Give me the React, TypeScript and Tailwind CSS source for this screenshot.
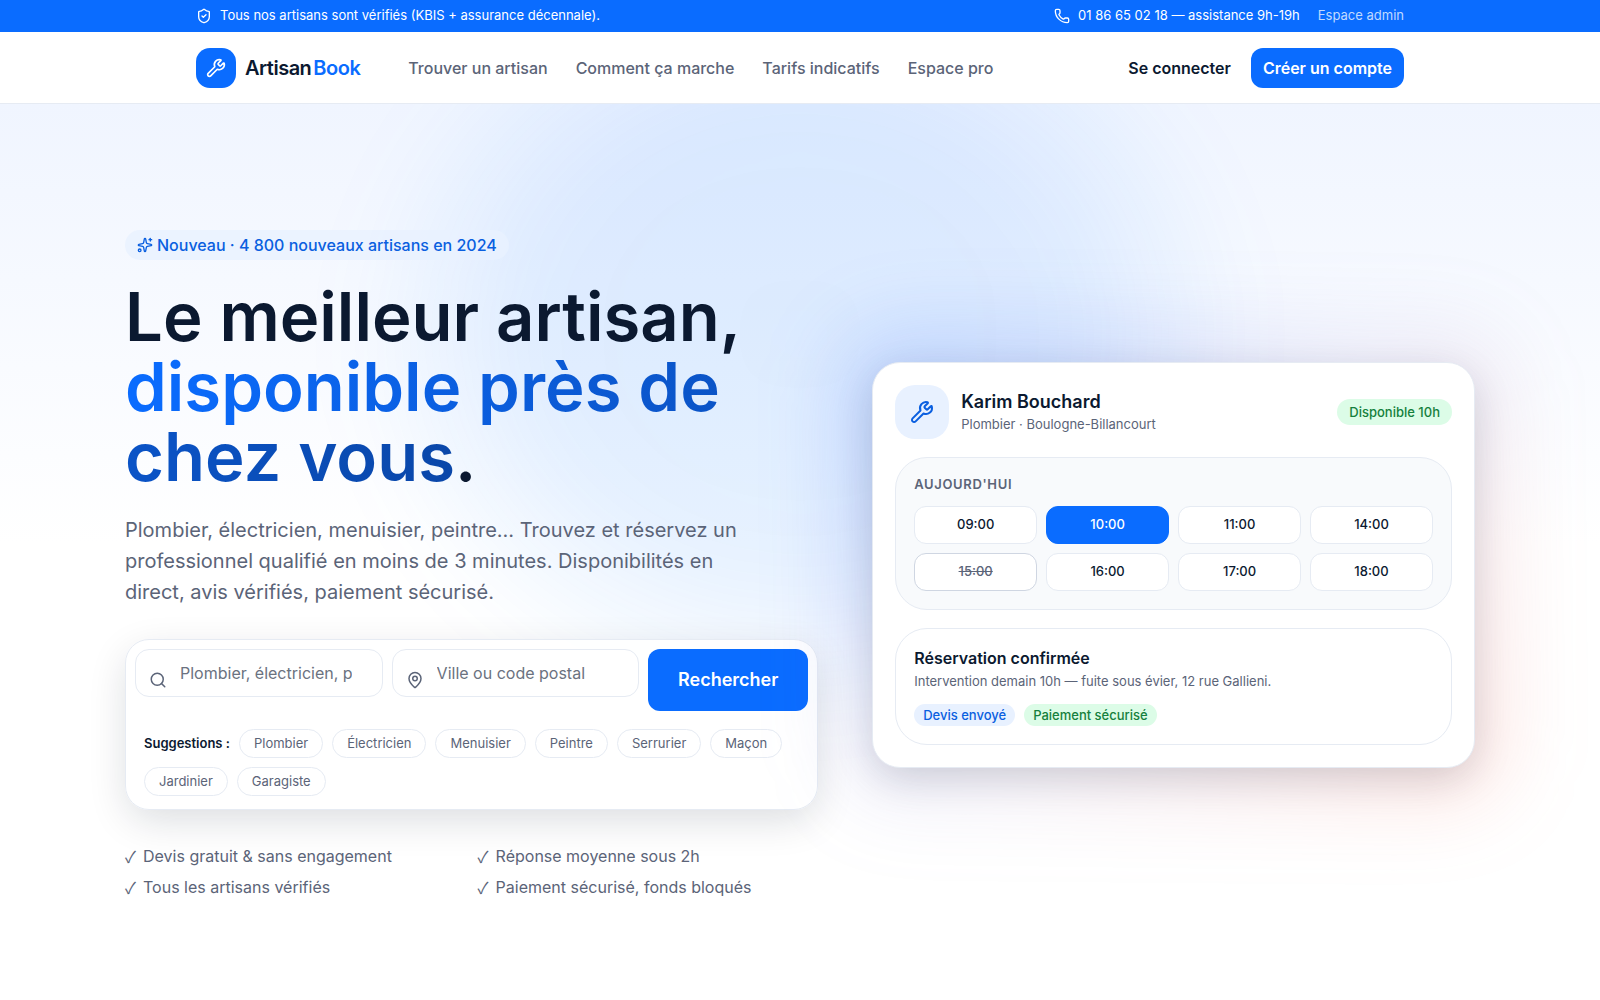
import { MapPin, Phone, Search, ShieldCheck, Sparkles, Wrench } from "lucide-react";

const navLinks = ["Trouver un artisan", "Comment ça marche", "Tarifs indicatifs", "Espace pro"];

const suggestions = [
  "Plombier",
  "Électricien",
  "Menuisier",
  "Peintre",
  "Serrurier",
  "Maçon",
  "Jardinier",
  "Garagiste",
];

const features = [
  "Devis gratuit & sans engagement",
  "Réponse moyenne sous 2h",
  "Tous les artisans vérifiés",
  "Paiement sécurisé, fonds bloqués",
];

const slots = [
  { time: "09:00" },
  { time: "10:00", selected: true },
  { time: "11:00" },
  { time: "14:00" },
  { time: "15:00", taken: true },
  { time: "16:00" },
  { time: "17:00" },
  { time: "18:00" },
];

const TopBar = () => (
  <div className="bg-[#0a6cff] text-[13px] text-white">
    <div className="mx-auto flex h-8 max-w-[1240px] items-center justify-between px-4">
      <p className="flex items-center gap-2">
        <ShieldCheck className="size-4" />
        Tous nos artisans sont vérifiés (KBIS + assurance décennale).
      </p>
      <div className="flex items-center gap-[18px]">
        <a href="#telephone" className="flex items-center gap-2">
          <Phone className="size-4" />
          01 86 65 02 18 — assistance 9h-19h
        </a>
        <a href="#admin" className="text-white/75">
          Espace admin
        </a>
      </div>
    </div>
  </div>
);

const Header = () => (
  <header className="border-b border-[#e6ebf3] bg-white">
    <div className="mx-auto flex h-[71px] max-w-[1240px] items-center px-4">
      <a href="#accueil" className="flex items-center gap-[9px]">
        <span className="flex size-10 items-center justify-center rounded-[14px] bg-[#0a6cff] text-white">
          <Wrench className="size-5" />
        </span>
        <span className="flex gap-[2px] text-xl font-semibold tracking-tight">
          Artisan<span className="text-[#0a6cff]">Book</span>
        </span>
      </a>
      <nav className="ml-12 flex gap-7 text-base font-medium text-[#5b6478]">
        {navLinks.map((link) => (
          <a key={link} href="#nav">
            {link}
          </a>
        ))}
      </nav>
      <div className="ml-auto flex items-center gap-5 text-base font-semibold">
        <a href="#connexion">Se connecter</a>
        <button className="h-10 rounded-xl bg-[#0a6cff] px-3 text-white">Créer un compte</button>
      </div>
    </div>
  </header>
);

const SearchCard = () => (
  <form className="mt-[31px] rounded-3xl border border-[#e6ebf3] bg-white/90 p-[9px] shadow-[0_12px_40px_-4px_rgba(15,23,42,0.16)]">
    <div className="grid grid-cols-[1fr_1fr_160px] gap-[9px]">
      <div className="relative">
        <Search className="absolute top-1/2 left-[14px] size-[18px] -translate-y-1/2 text-[#5b6478]" />
        <input
          aria-label="Métier"
          placeholder="Plombier, électricien, peintre…"
          className="h-12 w-full rounded-[14px] border border-[#e6ebf3] bg-white pr-[30px] pl-11 text-base placeholder:text-[#6b7280]"
        />
      </div>
      <div className="relative">
        <MapPin className="absolute top-1/2 left-[14px] size-[18px] -translate-y-1/2 text-[#5b6478]" />
        <input
          aria-label="Ville"
          placeholder="Ville ou code postal"
          className="h-12 w-full rounded-[14px] border border-[#e6ebf3] bg-white pr-[30px] pl-11 text-base placeholder:text-[#6b7280]"
        />
      </div>
      <button type="button" className="h-[62px] rounded-xl bg-[#0a6cff] text-lg font-semibold text-white">
        Rechercher
      </button>
    </div>
    <div className="flex flex-wrap items-center gap-[9px] px-[9px] pt-[18px] pb-1 text-[13px]">
      <span className="font-semibold">Suggestions :</span>
      {suggestions.map((s) => (
        <button
          key={s}
          type="button"
          className="h-[29px] rounded-full border border-[#e6ebf3] bg-white px-[14px] text-[#5b6478]"
        >
          {s}
        </button>
      ))}
    </div>
  </form>
);

const slotClass = (slot: { selected?: boolean; taken?: boolean }) => {
  if (slot.selected) return "border-[#0a6cff] bg-[#0a6cff] text-white";
  if (slot.taken) return "border-[#cfd6e2] bg-white text-[#5b6478] line-through";
  return "border-[#e6ebf3] bg-white";
};

const BookingCard = () => (
  <div className="relative pb-1">
    {/* colour glow behind the card */}
    <div className="absolute -inset-8 rounded-[60px] bg-[linear-gradient(135deg,rgba(40,100,255,0.2),rgba(130,110,190,0.11)_50%,rgba(255,100,70,0.17))] blur-[40px]" />
    <div className="relative rounded-[28px] border border-[#e6ebf3] bg-white p-[22px] shadow-[0_12px_40px_-4px_rgba(15,23,42,0.18)]">
      <div className="flex items-center">
        <span className="flex size-[54px] items-center justify-center rounded-[20px] bg-[#e8f1ff] text-[#0a5fe0]">
          <Wrench className="size-6" />
        </span>
        <div className="ml-3">
          <p className="text-lg leading-6 font-semibold">Karim Bouchard</p>
          <p className="text-[13px] leading-5 text-[#5b6478]">Plombier · Boulogne-Billancourt</p>
        </div>
        <span className="ml-auto rounded-full bg-[#dcfce7] px-3 py-1 text-[13px] leading-[18px] font-medium text-[#15803d]">
          Disponible 10h
        </span>
      </div>

      <div className="mt-[18px] rounded-[32px] border border-[#e6ebf3] bg-[#f8fafc] p-[18px]">
        <p className="text-[13px] leading-4 font-semibold tracking-wider text-[#5b6478] uppercase">Aujourd'hui</p>
        <div className="mt-[14px] grid grid-cols-4 gap-[9px]">
          {slots.map((slot) => (
            <button
              key={slot.time}
              className={`h-[38px] rounded-xl border text-[13px] font-medium ${slotClass(slot)}`}
            >
              {slot.time}
            </button>
          ))}
        </div>
      </div>

      <div className="mt-[18px] rounded-[32px] border border-[#e6ebf3] bg-white p-[18px]">
        <p className="text-base leading-[22px] font-semibold">Réservation confirmée</p>
        <p className="text-[13px] leading-6 text-[#5b6478]">
          Intervention demain 10h — fuite sous évier, 12 rue Gallieni.
        </p>
        <div className="mt-[11px] flex gap-[9px] text-[13px] leading-[22px] font-medium">
          <span className="rounded-full bg-[#e8f1ff] px-[9px] text-[#0a5fe0]">Devis envoyé</span>
          <span className="rounded-full bg-[#dcfce7] px-[9px] text-[#15803d]">Paiement sécurisé</span>
        </div>
      </div>
    </div>
  </div>
);

const Hero = () => (
  <section className="relative overflow-hidden bg-[linear-gradient(180deg,#f0f5ff_0,#ffffff_440px)]">
    <div className="absolute top-[-160px] left-1/2 h-[780px] w-[900px] -translate-x-1/2 rounded-full bg-[radial-gradient(closest-side,rgba(10,120,255,0.11),rgba(10,120,255,0.1)_60%,transparent)] blur-2xl" />
    <div className="relative mx-auto grid max-w-[1350px] grid-cols-[1.15fr_1fr] items-center gap-[54px] pt-[126px] pb-24">
      <div>
        <span className="inline-flex h-[30px] items-center gap-1 rounded-full bg-[#e8f1ff]/80 px-3 text-base font-medium text-[#0a5fe0]">
          <Sparkles className="size-4" />
          Nouveau · 4 800 nouveaux artisans en 2024
        </span>
        <h1 className="mt-[22px] text-[67px] leading-[70px] font-semibold">
          Le meilleur artisan,{" "}
          <span className="bg-linear-to-r from-[#0a6cff] to-[#0a47a9] bg-clip-text text-transparent">
            disponible près de chez vous
          </span>
          .
        </h1>
        <p className="mt-[23px] max-w-[640px] text-xl leading-[31px] text-[#5b6478]">
          Plombier, électricien, menuisier, peintre… Trouvez et réservez un professionnel qualifié en moins de 3
          minutes. Disponibilités en direct, avis vérifiés, paiement sécurisé.
        </p>
        <SearchCard />
        <ul className="mt-[31px] grid grid-cols-2 gap-x-3 text-base leading-[31px] text-[#5b6478]">
          {features.map((f) => (
            <li key={f} className="flex gap-1">
              <span className="w-[14px] font-['Noto_Sans_CJK_JP',sans-serif]">✓</span>
              {f}
            </li>
          ))}
        </ul>
      </div>
      <BookingCard />
    </div>
  </section>
);

const App = () => (
  <div className="min-h-screen bg-white font-[Inter,sans-serif] text-[#0b1930]">
    <TopBar />
    <Header />
    <Hero />
  </div>
);

export default App;
